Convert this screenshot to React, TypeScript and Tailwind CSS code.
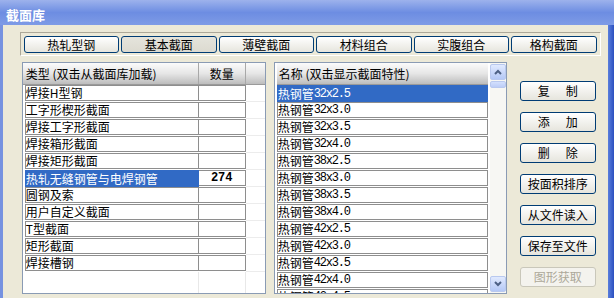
const leftRows = [
  "焊接H型钢",
  "工字形楔形截面",
  "焊接工字形截面",
  "焊接箱形截面",
  "焊接矩形截面",
  "热轧无缝钢管与电焊钢管",
  "圆钢及索",
  "用户自定义截面",
  "T型截面",
  "矩形截面",
  "焊接槽钢",
];

const rightRows = [
  "32x2.5",
  "32x3.0",
  "32x3.5",
  "32x4.0",
  "38x2.5",
  "38x3.0",
  "38x3.5",
  "38x4.0",
  "42x2.5",
  "42x3.0",
  "42x3.5",
  "42x4.0",
  "42x4.5",
];

const tabs = [
  { label: "热轧型钢", w: "w-[95px]" },
  { label: "基本截面", w: "w-[96px]", active: true },
  { label: "薄壁截面", w: "w-[95px]" },
  { label: "材料组合", w: "w-[96px]" },
  { label: "实腹组合", w: "w-[95px]" },
  { label: "格构截面", w: "w-[86px]" },
];

function Chevron({ up }: { up?: boolean }) {
  return (
    <svg width="8" height="6" viewBox="0 0 8 6">
      <path
        d={up ? "M1 5 L4 2 L7 5" : "M1 1 L4 4 L7 1"}
        fill="none"
        stroke="#4d6185"
        strokeWidth="2"
      />
    </svg>
  );
}

function SideButton({ children, disabled }: { children: React.ReactNode; disabled?: boolean }) {
  return (
    <div
      className={
        disabled
          ? "h-[20px] w-[76px] rounded-[3px] border border-[#c9c7ba] bg-[#f4f3ee] flex items-center justify-center text-[12px] text-[#aca899]"
          : "h-[20px] w-[76px] rounded-[3px] border border-[#003c74] bg-gradient-to-b from-[#ffffff] to-[#e6e5dd] flex items-center justify-center text-[12px] text-black"
      }
    >
      {children}
    </div>
  );
}

export default function App() {
  return (
    <div
      className="w-[614px] h-[298px] overflow-hidden flex flex-col bg-[#6f8fe3]"
      style={{ fontFamily: '"Noto Sans CJK SC", "Noto Sans", sans-serif' }}
    >
      {/* Title bar */}
      <div className="h-[25px] shrink-0 flex items-center pl-[6px] pt-[4px] bg-gradient-to-b from-[#9db2ec] via-[#6d8de2] to-[#7e9be6] text-white font-bold text-[13px] leading-none">
        截面库
      </div>

      <div className="flex-1 flex">
        <div className="w-[3px] bg-[#7692e0]" />
        <div className="flex-1 bg-[#ece9d8] pt-[7px] pl-[17px] pr-[7px] flex flex-col">
          {/* Tab strip */}
          <div className="h-[24px] shrink-0 border border-t-[#aca899] border-l-[#aca899] border-b-white border-r-white px-[3px] pt-[3px] flex gap-[2px]">
            {tabs.map((t) => (
              <div
                key={t.label}
                className={
                  t.active
                    ? `${t.w} h-[17px] rounded-[3px] border border-[#003c74] bg-gradient-to-b from-[#e5e4dc] to-[#dcdad0] flex items-center justify-center text-[12px] leading-none`
                    : `${t.w} h-[17px] rounded-[3px] border border-[#003c74] bg-gradient-to-b from-[#ffffff] to-[#e6e5dd] flex items-center justify-center text-[12px] leading-none`
                }
              >
                {t.label}
              </div>
            ))}
          </div>

          {/* Main area */}
          <div className="mt-[6px] pl-[2px] flex">
            {/* Left grid */}
            <div className="w-[244px] h-[232px] border border-[#8a9bb4] bg-white flex flex-col overflow-hidden">
              <div className="h-[22px] shrink-0 flex bg-gradient-to-b from-[#fbfbfb] via-[#e6e6e6] to-[#bdbdbd] text-[12px] leading-none border-b border-[#9a9a9a]">
                <div className="w-[176px] flex items-center pl-[3px] border-r border-[#a8a8a8]">
                  类型 (双击从截面库加载)
                </div>
                <div className="w-[47px] flex items-center justify-center border-r border-[#a8a8a8]">数量</div>
                <div className="flex-1" />
              </div>
              <div className="flex flex-col pl-[2px] shrink-0">
                {leftRows.map((r) => {
                  const sel = r === "热轧无缝钢管与电焊钢管";
                  return (
                    <div key={r} className="h-[17px] shrink-0 flex">
                      <div
                        className={
                          sel
                            ? "w-[174px] h-[17px] bg-[#316ac5] text-white flex items-center pl-[1px] text-[12px] leading-none"
                            : "w-[174px] h-[16px] border border-[#8e8e8e] bg-white flex items-center text-[12px] leading-none"
                        }
                      >
                        {r}
                      </div>
                      <div className="w-[47px] h-[16px] border border-l-0 border-[#8e8e8e] bg-white flex items-center justify-center text-[12px] font-bold leading-none" style={{ fontFamily: '"Liberation Mono", monospace' }}>
                        {sel ? "274" : ""}
                      </div>
                      <div className="flex-1 border-b border-[#ececec]" />
                    </div>
                  );
                })}
              </div>
              <div className="flex-1 flex pl-[2px]">
                <div className="w-[174px] border-r border-[#e8e8e8]" />
                <div className="w-[47px] border-r border-[#e8e8e8]" />
              </div>
            </div>

            {/* Right list */}
            <div className="ml-[8px] w-[233px] h-[232px] border border-[#8a9bb4] bg-white flex overflow-hidden">
              <div className="w-[213px] pl-[2px] flex flex-col">
                <div className="h-[22px] shrink-0 flex items-center pl-[2px] bg-gradient-to-b from-[#fbfbfb] via-[#e6e6e6] to-[#bdbdbd] text-[12px] leading-none border-b border-[#9a9a9a]">
                  名称 (双击显示截面特性)
                </div>
                {rightRows.map((r, i) => (
                  <div
                    key={r}
                    className={
                      i === 0
                        ? "h-[17px] shrink-0 bg-[#316ac5] text-white flex items-center pl-[1px] text-[12px] leading-none"
                        : "h-[16px] shrink-0 mb-[1px] border border-[#8e8e8e] bg-white flex items-center text-[12px] leading-none"
                    }
                  >
                    热钢管
                    <span className="tracking-[-1.2px]" style={{ fontFamily: '"Liberation Mono", monospace' }}>
                      {r}
                    </span>
                  </div>
                ))}
              </div>
              {/* Scrollbar */}
              <div className="ml-[2px] w-[16px] flex flex-col pt-[1px] pb-[1px] bg-[#f7f7f3]">
                <div className="h-[16px] shrink-0 rounded-[2px] border border-[#b9c9ef] bg-gradient-to-b from-[#e1eafe] to-[#b4c8f6] flex items-center justify-center">
                  <Chevron up />
                </div>
                <div className="mt-[1px] h-[7px] shrink-0 rounded-[2px] border border-[#b9c9ef] bg-gradient-to-b from-[#d3e0fd] to-[#bccdf7]" />
                <div className="flex-1" />
                <div className="h-[16px] shrink-0 rounded-[2px] border border-[#b9c9ef] bg-gradient-to-b from-[#e1eafe] to-[#b4c8f6] flex items-center justify-center">
                  <Chevron />
                </div>
              </div>
            </div>

            {/* Buttons */}
            <div className="ml-[13px] pt-[19px] flex flex-col gap-[11px]">
              <SideButton>
                <span>复</span>
                <span className="ml-[16px]">制</span>
              </SideButton>
              <SideButton>
                <span>添</span>
                <span className="ml-[16px]">加</span>
              </SideButton>
              <SideButton>
                <span>删</span>
                <span className="ml-[16px]">除</span>
              </SideButton>
              <SideButton>按面积排序</SideButton>
              <SideButton>从文件读入</SideButton>
              <SideButton>保存至文件</SideButton>
              <SideButton disabled>图形获取</SideButton>
            </div>
          </div>
        </div>
        <div className="w-[7px] bg-gradient-to-r from-[#5a7edc] to-[#2b4fbf]" />
      </div>
    </div>
  );
}
